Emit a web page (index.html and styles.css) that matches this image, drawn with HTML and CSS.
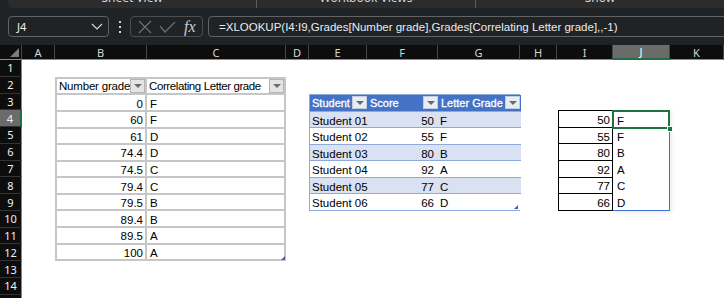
FILE: index.html
```html
<!DOCTYPE html>
<html lang="en">
<head>
  <meta charset="UTF-8" />
  <title>XLOOKUP grades</title>
  <link rel="stylesheet" href="styles.css">
</head>
<body>

  <!-- bottom edge of the ribbon -->
  <div class="ribbon-tail">
    <div class="group g1"><span>Sheet View</span></div>
    <div class="group g2"><span>Workbook Views</span></div>
    <div class="group g3"><span>Show</span></div>
  </div>

  <!-- formula bar -->
  <div class="fbar">
    <div class="namebox">
      <span>J4</span>
      <svg width="12" height="7" viewBox="0 0 12 7"><polyline points="1,1 6,6 11,1" fill="none" stroke="#d8d8d8" stroke-width="1.2"/></svg>
    </div>
    <div class="dots"><i></i><i></i><i></i></div>
    <div class="fxbox">
      <svg width="14" height="14" viewBox="0 0 14 14"><path d="M1 1 L13 13 M13 1 L1 13" stroke="#707070" stroke-width="1.2"/></svg>
      <svg width="17" height="12" viewBox="0 0 17 12"><polyline points="1,5 6,11 16,1" fill="none" stroke="#707070" stroke-width="1.2"/></svg>
      <span class="fx">fx</span>
    </div>
    <div class="formula">=XLOOKUP(I4:I9,Grades[Number grade],Grades[Correlating Letter grade],,-1)</div>
  </div>

  <!-- sheet -->
  <div class="sheet">
    <div class="corner">
      <svg width="9" height="9" viewBox="0 0 9 9"><polygon points="9,0 9,9 0,9" fill="#7c7c7c"/></svg>
    </div>
    <div class="colhead">A</div>
    <div class="colhead">B</div>
    <div class="colhead">C</div>
    <div class="colhead">D</div>
    <div class="colhead">E</div>
    <div class="colhead">F</div>
    <div class="colhead">G</div>
    <div class="colhead">H</div>
    <div class="colhead">I</div>
    <div class="colhead active">J</div>
    <div class="colhead">K</div>

    <div class="rowhead r1">1</div>
    <div class="rowhead r2">2</div>
    <div class="rowhead r3">3</div>
    <div class="rowhead r4 active">4</div>
    <div class="rowhead r5">5</div>
    <div class="rowhead r6">6</div>
    <div class="rowhead r7">7</div>
    <div class="rowhead r8">8</div>
    <div class="rowhead r9">9</div>
    <div class="rowhead r10">10</div>
    <div class="rowhead r11">11</div>
    <div class="rowhead r12">12</div>
    <div class="rowhead r13">13</div>
    <div class="rowhead r14">14</div>
    <div class="rowhead r15">15</div>

    <!-- Grades table -->
    <div class="grades">
      <div class="cell head">Number grade<span class="drop"></span></div>
      <div class="cell head tight">Correlating Letter grade<span class="drop"></span></div>
      <div class="cell num">0</div><div class="cell">F</div>
      <div class="cell num">60</div><div class="cell">F</div>
      <div class="cell num">61</div><div class="cell">D</div>
      <div class="cell num">74.4</div><div class="cell">D</div>
      <div class="cell num">74.5</div><div class="cell">C</div>
      <div class="cell num">79.4</div><div class="cell">C</div>
      <div class="cell num">79.5</div><div class="cell">B</div>
      <div class="cell num">89.4</div><div class="cell">B</div>
      <div class="cell num">89.5</div><div class="cell">A</div>
      <div class="cell num">100</div><div class="cell">A</div>
      <span class="resize"></span>
    </div>

    <!-- Students table -->
    <div class="students">
      <div class="shead">Student<span class="drop"></span></div>
      <div class="shead">Score<span class="drop"></span></div>
      <div class="shead">Letter Grade<span class="drop"></span></div>

      <div class="srow band"><span>Student 01</span><span class="num">50</span><span>F</span></div>
      <div class="srow"><span>Student 02</span><span class="num">55</span><span>F</span></div>
      <div class="srow band"><span>Student 03</span><span class="num">80</span><span>B</span></div>
      <div class="srow"><span>Student 04</span><span class="num">92</span><span>A</span></div>
      <div class="srow band"><span>Student 05</span><span class="num">77</span><span>C</span></div>
      <div class="srow"><span>Student 06</span><span class="num">66</span><span>D</span></div>
      <span class="resize"></span>
    </div>

    <!-- lookup values and spilled result -->
    <div class="scores">
      <div class="cell">50</div>
      <div class="cell">55</div>
      <div class="cell">80</div>
      <div class="cell">92</div>
      <div class="cell">77</div>
      <div class="cell">66</div>
    </div>
    <div class="letters">
      <div class="cell selected">F<span class="handle"></span></div>
      <div class="cell">F</div>
      <div class="cell">B</div>
      <div class="cell">A</div>
      <div class="cell">C</div>
      <div class="cell">D</div>
    </div>
  </div>

</body>
</html>
```

FILE: styles.css
```css
* {
  box-sizing: border-box;
  margin: 0;
  padding: 0;
}

body {
  width: 724px;
  height: 298px;
  overflow: hidden;
  background: #1f2326;
  font-family: "Liberation Sans", Arial, sans-serif;
}

/* ribbon */
.ribbon-tail {
  height: 8px;
  margin-left: 8px;
  display: flex;
  overflow: hidden;
  background: #2c2c2c;
  border-radius: 0 0 0 6px;
}

.group {
  height: 8px;
  display: flex;
  justify-content: center;
  color: #d4d4d4;
  font-family: "Noto Sans", sans-serif;
  font-size: 12px;
  white-space: nowrap;
}

.group span {
  display: block;
  margin-top: -11px;
}

.g1 {
  width: 269px;
  border-right: 1px solid #5c5c5c;
}

.g2 {
  width: 219px;
  border-right: 1px solid #5c5c5c;
  flex-shrink: 0;
}

.g3 {
  width: 248px;
  flex-shrink: 0;
}

/* formula bar */
.fbar {
  height: 37px;
  padding: 8px 0 8px 8px;
  display: flex;
  align-items: stretch;
}

.namebox {
  width: 101px;
  display: flex;
  align-items: center;
  justify-content: space-between;
  padding: 0 5px 0 8px;
  border: 1px solid #626262;
  border-radius: 4px;
  color: #f0f0f0;
  font-family: "Noto Sans", sans-serif;
  font-size: 11px;
}

.dots {
  width: 2px;
  margin: 0 9px 0 10px;
  display: flex;
  flex-direction: column;
  justify-content: center;
  gap: 3px;
}

.dots i {
  display: block;
  width: 2px;
  height: 2px;
  background: #cfcfcf;
}

.fxbox {
  width: 73px;
  display: flex;
  align-items: center;
  gap: 7px;
  padding-left: 7px;
  border: 1px solid #4e4e4e;
  border-radius: 4px;
}

.fx {
  font-family: "Liberation Serif", serif;
  font-style: italic;
  font-size: 16px;
  color: #cdcdcd;
  margin-left: 1px;
}

.formula {
  flex: 1;
  margin: 0 -20px 0 5px;
  padding-left: 10px;
  display: flex;
  align-items: center;
  border: 1px solid #626262;
  border-radius: 4px;
  color: #ececec;
  font-size: 11.5px;
  white-space: nowrap;
}

/* sheet grid */
.sheet {
  height: 253px;
  display: grid;
  grid-template-columns: 22px 33px 92px 139px 23px 58px 71px 82px 37px 56px 57px 54px;
  grid-template-rows: 15px repeat(15, 16.77px);
  background: #fff;
  font-size: 11.5px;
  color: #000;
}

.corner {
  background: #0d0d0d;
  border-right: 1px solid #474747;
  border-bottom: 1px solid #8a8a8a;
  display: flex;
  align-items: flex-end;
  justify-content: flex-end;
  padding: 0 2px 2px 0;
}

.colhead {
  background: #0d0d0d;
  color: #d6d6d6;
  font-family: "Noto Sans", sans-serif;
  font-size: 11px;
  display: flex;
  align-items: center;
  justify-content: center;
  border-right: 1px solid #474747;
  border-bottom: 1px solid #8a8a8a;
}

.colhead.active {
  background: #6b6b6b;
  color: #fff;
  border-bottom: 2px solid #1e7145;
}

.rowhead {
  grid-column: 1;
  background: #0d0d0d;
  color: #f0f0f0;
  font-family: "Noto Sans", sans-serif;
  font-size: 11px;
  display: flex;
  align-items: center;
  justify-content: center;
  border-bottom: 1px solid #333;
  border-right: 1px solid #8a8a8a;
}

.rowhead.active {
  background: #6b6b6b;
  border-right: 2px solid #1e7145;
}

.r1 { grid-row: 2; }
.r2 { grid-row: 3; }
.r3 { grid-row: 4; }
.r4 { grid-row: 5; }
.r5 { grid-row: 6; }
.r6 { grid-row: 7; }
.r7 { grid-row: 8; }
.r8 { grid-row: 9; }
.r9 { grid-row: 10; }
.r10 { grid-row: 11; }
.r11 { grid-row: 12; }
.r12 { grid-row: 13; }
.r13 { grid-row: 14; }
.r14 { grid-row: 15; }
.r15 { grid-row: 16; }

.cell {
  display: flex;
  align-items: center;
  padding: 2px 2px 0 3px;
  white-space: nowrap;
  overflow: hidden;
}

.num {
  justify-content: flex-end;
}

.drop {
  margin-left: auto;
  flex-shrink: 0;
  width: 15px;
  height: 14px;
  background: #e4e4e4;
  border: 1px solid #b4b4b4;
  position: relative;
}

.drop::after {
  content: "";
  position: absolute;
  left: 3px;
  top: 4px;
  border-left: 4px solid transparent;
  border-right: 4px solid transparent;
  border-top: 4px solid #6a6a6a;
}

.resize {
  position: absolute;
  right: 1px;
  bottom: 1px;
  width: 0;
  height: 0;
  border-left: 4px solid transparent;
  border-bottom: 4px solid #3f5fae;
}

/* Grades table */
.grades {
  grid-column: 3 / 5;
  grid-row: 3 / 14;
  position: relative;
  display: grid;
  grid-template-columns: 1fr 139px;
  grid-template-rows: repeat(11, 1fr);
  border-left: 2px solid #c6c6c6;
  border-top: 2px solid #c6c6c6;
}

.grades .cell {
  border-right: 2px solid #c6c6c6;
  border-bottom: 2px solid #c6c6c6;
}

.grades .head {
  padding: 0 0 0 2px;
  letter-spacing: -0.2px;
}

.grades .tight {
  letter-spacing: -0.4px;
}

/* Students table */
.students {
  grid-column: 6 / 9;
  grid-row: 4 / 11;
  position: relative;
  display: grid;
  grid-template-columns: 58px 71px 82px;
  grid-template-rows: repeat(7, 1fr);
  border: 1px solid #8ea9db;
}

.shead {
  display: flex;
  align-items: center;
  padding-left: 2px;
  background: #4472c4;
  color: #fff;
  font-size: 11px;
  -webkit-text-stroke: 0.3px #fff;
  white-space: nowrap;
}

.shead .drop {
  width: 15px;
  height: 13px;
  margin-right: 1px;
  background: #e8ecf3;
  border-color: #c3cde0;
}

.srow {
  grid-column: 1 / 4;
  display: grid;
  grid-template-columns: 58px 70px 82px;
  align-items: center;
  padding-top: 2px;
  border-top: 1px solid #8ea9db;
  background: #fff;
}

.srow span {
  padding-left: 2px;
}

.srow .num {
  text-align: right;
  padding-right: 4px;
}

.srow.band {
  background: #d9e1f2;
}

/* lookup range */
.scores {
  grid-column: 10;
  grid-row: 5 / 11;
  display: grid;
  grid-template-rows: repeat(6, 1fr);
  border-left: 1px solid #000;
  border-top: 1px solid #000;
  margin-left: 1px;
}

.scores .cell {
  justify-content: flex-end;
  border-right: 1px solid #000;
  border-bottom: 1px solid #000;
}

.letters {
  grid-column: 11;
  grid-row: 5 / 11;
  display: grid;
  grid-template-rows: repeat(6, 1fr);
  border: 1px solid #3a72cf;
  border-left-width: 0;
  box-shadow: 2px 2px 4px rgba(0, 0, 0, 0.08);
}

.letters .cell {
  padding-left: 4px;
}

.selected {
  position: relative;
  overflow: visible;
}

.selected::after {
  content: "";
  position: absolute;
  left: -1px;
  top: -1px;
  right: -1px;
  bottom: -1px;
  border: 2px solid #1e7145;
}

.handle {
  position: absolute;
  right: -4px;
  bottom: -4px;
  width: 6px;
  height: 6px;
  background: #1e7145;
  border: 1px solid #fff;
  z-index: 1;
}
```
